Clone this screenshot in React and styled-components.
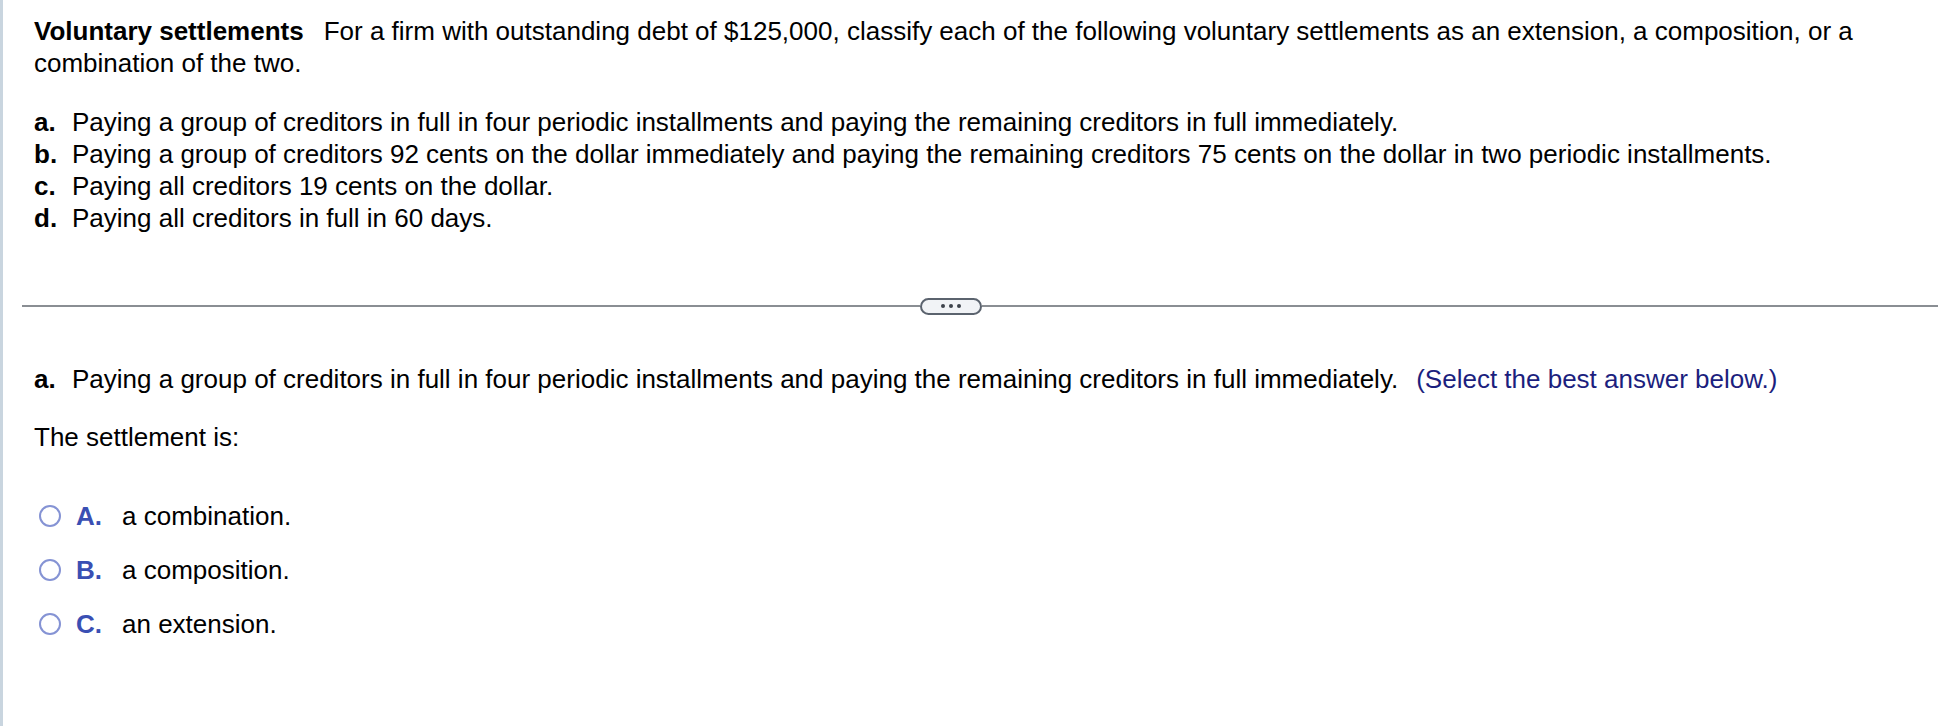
import React from 'react';
import styled, { createGlobalStyle } from 'styled-components';

const GlobalStyle = createGlobalStyle`
  html, body {
    margin: 0;
    padding: 0;
    background: #ffffff;
  }
  body {
    font-family: "Liberation Sans", Arial, sans-serif;
    color: #000;
  }
`;

const Page = styled.div`
  min-height: 726px;
  box-sizing: border-box;
  border-left: 3px solid #c9d5df;
  padding-top: 15px;
  font-size: 26px;
  line-height: 32px;
`;

const Block = styled.div`
  padding-left: 31px;
  padding-right: 20px;
  margin-top: ${(p) => p.$top || 0}px;
`;

const Title = styled.strong`
  font-weight: bold;
  margin-right: 20px;
`;

const List = styled.ul`
  list-style: none;
  margin: 0;
  padding: 0;
`;

const Item = styled.li`
  display: flex;
`;

const Label = styled.span`
  flex: 0 0 38px;
  font-weight: bold;
`;

const Hint = styled.span`
  color: #1c1f7e;
  margin-left: 18px;
`;

const Divider = styled.div`
  display: flex;
  align-items: center;
  height: 20px;
  margin-top: 62px;
  margin-left: 19px;
`;

const Rule = styled.div`
  height: 2px;
  background: #8a8e93;
  flex: ${(p) => (p.$width ? `0 0 ${p.$width}px` : '1')};
`;

const MoreButton = styled.button`
  display: flex;
  align-items: center;
  justify-content: center;
  gap: 4px;
  width: 62px;
  height: 17px;
  padding: 0;
  box-sizing: border-box;
  border: 2px solid #5b636e;
  border-radius: 9px;
  background: #f1f3f6;
  cursor: pointer;
`;

const Dot = styled.span`
  width: 4px;
  height: 4px;
  border-radius: 50%;
  background: #3d434b;
`;

const Options = styled.div`
  display: flex;
  flex-direction: column;
  gap: 22px;
`;

const Option = styled.label`
  display: flex;
  align-items: center;
  cursor: pointer;
`;

const Radio = styled.span`
  width: 22px;
  height: 22px;
  box-sizing: border-box;
  border: 2.5px solid #8593d4;
  border-radius: 50%;
  margin-left: 5px;
  margin-right: 15px;
  flex: 0 0 auto;
`;

const Letter = styled.span`
  flex: 0 0 46px;
  font-weight: bold;
  color: #3a4fb3;
`;

const parts = [
  ['a.', 'Paying a group of creditors in full in four periodic installments and paying the remaining creditors in full immediately.'],
  ['b.', 'Paying a group of creditors 92 cents on the dollar immediately and paying the remaining creditors 75 cents on the dollar in two periodic installments.'],
  ['c.', 'Paying all creditors 19 cents on the dollar.'],
  ['d.', 'Paying all creditors in full in 60 days.'],
];

const answers = [
  ['A.', 'a combination.'],
  ['B.', 'a composition.'],
  ['C.', 'an extension.'],
];

export default function App() {
  return (
    <>
      <GlobalStyle />
      <Page>
        <Block>
          <Title>Voluntary settlements</Title>
          <span>
            For a firm with outstanding debt of $125,000, classify each of the following voluntary settlements as an extension, a composition, or a combination of the two.
          </span>
        </Block>

        <Block $top={27}>
          <List>
            {parts.map(([l, t]) => (
              <Item key={l}>
                <Label>{l}</Label>
                <span>{t}</span>
              </Item>
            ))}
          </List>
        </Block>

        <Divider>
          <Rule $width={898} />
          <MoreButton aria-label="more">
            <Dot />
            <Dot />
            <Dot />
          </MoreButton>
          <Rule />
        </Divider>

        <Block $top={47}>
          <Item as="div">
            <Label>a.</Label>
            <span>
              {parts[0][1]}
              <Hint>(Select the best answer below.)</Hint>
            </span>
          </Item>
        </Block>

        <Block $top={26}>The settlement is:</Block>

        <Block $top={47}>
          <Options>
            {answers.map(([l, t]) => (
              <Option key={l}>
                <Radio />
                <Letter>{l}</Letter>
                <span>{t}</span>
              </Option>
            ))}
          </Options>
        </Block>
      </Page>
    </>
  );
}
